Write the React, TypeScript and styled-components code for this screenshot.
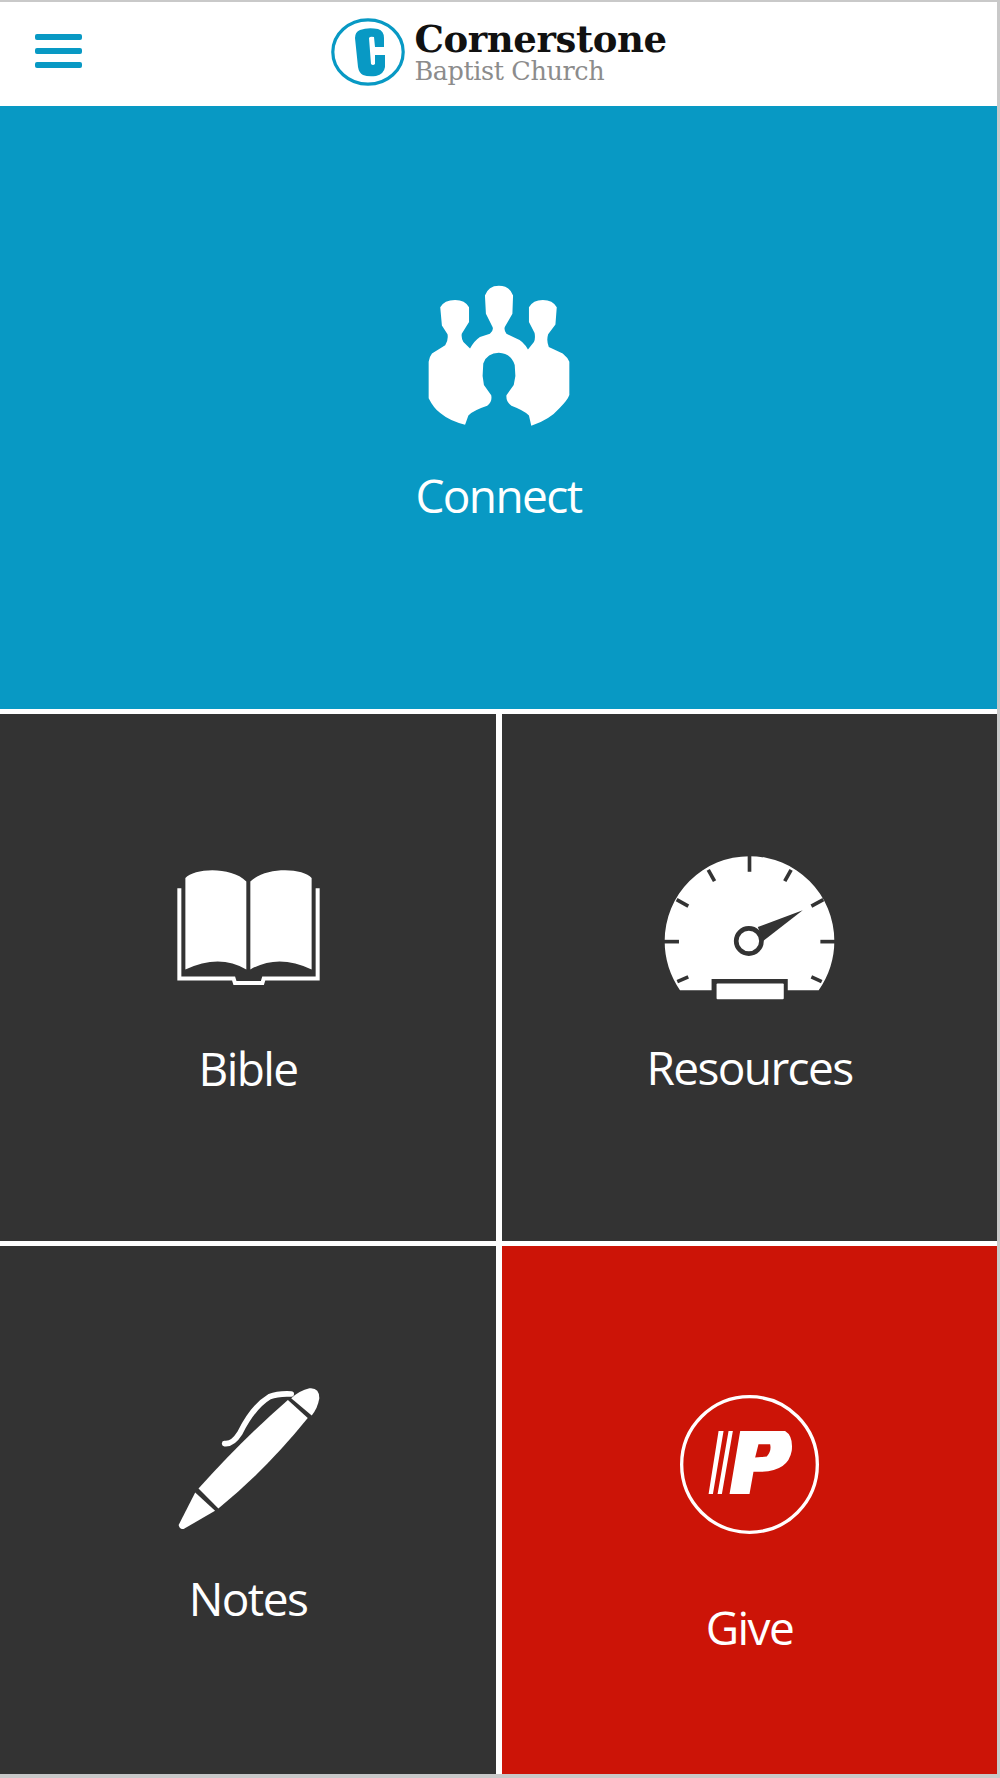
import React from 'react';
import styled, { createGlobalStyle } from 'styled-components';

const colors = {
  blue: '#0899c4',
  dark: '#333333',
  red: '#cc1407',
  frame: '#c9c9c9',
};

const GlobalStyle = createGlobalStyle`
  html, body {
    margin: 0;
    padding: 0;
    background: #fff;
  }
`;

const ConnectIcon = () => (
  <svg width="143" height="143" viewBox="80 40 432 432">
    <path
      fill="#fff"
      d="M195 465 L205 437 Q220 422 262 408 Q278 396 274 376 L252 345 L248 318 L250 280 Q262 248 297 248 Q335 250 345 285 L347 318 L342 345 L320 376 Q318 396 335 408 Q372 422 388 437 L395 468 Q450 450 480 415 Q505 390 510 375 L510 275 Q505 262 490 250 L448 230 Q440 212 446 192 L468 162 L472 110 Q460 88 430 88 Q400 88 388 110 L388 155 L405 188 Q408 205 403 215 L385 238 Q370 212 350 205 L320 190 Q312 180 315 170 L338 130 L340 75 Q330 45 297 45 Q265 45 255 75 L258 130 L278 170 Q282 180 270 190 L240 200 Q222 212 210 235 L190 215 Q183 205 185 190 L207 155 L207 110 Q195 88 165 88 Q132 88 120 110 L125 165 L142 192 Q145 210 135 225 L95 250 Q87 260 85 275 L85 385 Q100 415 120 430 Q150 455 195 465 Z"
    />
  </svg>
);

const BookIcon = () => (
  <svg width="144" height="118" viewBox="80 55 430 352">
    <g fill="#fff">
      <path d="M108 85 C135 55 245 50 290 95 L290 358 Q210 310 108 358 Z" />
      <path d="M302 95 C350 50 460 55 485 85 L485 358 Q385 310 302 358 Z" />
    </g>
    <path
      fill="none"
      stroke="#fff"
      strokeWidth="12"
      d="M90 115 L90 385 L252 385 L256 398 L338 398 L342 385 L503 385 L503 115"
    />
  </svg>
);

const GaugeIcon = () => (
  <svg width="171" height="146" viewBox="70 42 514 438">
    <path
      fill="#fff"
      d="M118 448 Q72 380 72 300 A255 255 0 0 1 582 300 Q582 380 535 448 L442 448 L442 414 L213 414 L213 448 Z"
    />
    <rect x="228" y="428" width="202" height="47" rx="3" fill="#fff" />
    <g stroke={colors.dark} strokeWidth="11">
      <path d="M327 44 V92" />
      <path d="M203 86 L222 120" />
      <path d="M108 176 L143 195" />
      <path d="M70 302 H115" />
      <path d="M110 422 L143 408" />
      <path d="M452 86 L433 120" />
      <path d="M549 176 L513 195" />
      <path d="M586 302 H540" />
      <path d="M544 422 L513 408" />
    </g>
    <path fill={colors.dark} d="M487 208 L352 258 L368 300 Z" />
    <circle cx="325" cy="300" r="38" fill="#fff" stroke={colors.dark} strokeWidth="14" />
  </svg>
);

const PenIcon = () => (
  <svg width="143" height="143" viewBox="80 48 432 432">
    <g fill="#fff">
      <path d="M145 358 Q275 212 415 90 L475 145 Q350 300 205 418 Z" />
      <path d="M135 370 L195 425 L100 480 Q88 482 85 468 Z" />
      <path d="M425 85 Q450 62 480 55 Q510 52 510 85 Q505 115 487 137 Z" />
    </g>
    <path
      fill="none"
      stroke="#fff"
      strokeWidth="17"
      strokeLinecap="round"
      d="M224 222 Q248 225 270 190 Q310 110 360 80 Q385 70 425 72"
    />
  </svg>
);

const PayIcon = () => (
  <svg width="139" height="139" viewBox="59 47 418 418">
    <circle cx="268" cy="256" r="204" fill="none" stroke="#fff" strokeWidth="10" />
    <path
      fill="#fff"
      fillRule="evenodd"
      d="M240 155 L375 155 Q400 170 395 215 Q385 275 305 278 L280 278 L268 345 L208 345 Z M295 195 L285 235 L320 232 Q335 215 330 195 Z"
    />
    <path fill="#fff" d="M175 155 L190 155 L158 345 L145 345 Z M205 155 L218 155 L185 345 L172 345 Z" />
  </svg>
);

const LogoMark = () => (
  <svg width="74" height="68" viewBox="0 0 74 68">
    <ellipse cx="37" cy="34" rx="35.2" ry="32.2" fill="#fff" stroke={colors.blue} strokeWidth="3.2" />
    <path
      fill={colors.blue}
      d="M29 12 Q37 9 47 11 Q53 13 53 20 L53 29 L44 29 L43 19 Q39 18 38 20 L40 46 Q42 48 44 46 L44 37 L54 37 L54 49 Q53 56 45 58 Q37 59 32 57 Q28 55 27 49 L24 20 Q24 14 29 12 Z"
    />
  </svg>
);

export default function App() {
  return (
    <>
      <GlobalStyle />
      <S.Frame>
        <S.Header>
          <S.Burger aria-label="Menu">
            <span />
            <span />
            <span />
          </S.Burger>
          <S.Logo>
            <LogoMark />
            <S.LogoText>
              <S.LogoName>Cornerstone</S.LogoName>
              <S.LogoSub>Baptist Church</S.LogoSub>
            </S.LogoText>
          </S.Logo>
        </S.Header>
        <S.Tiles>
          <S.Tile $color={colors.blue} $wide $top={178}>
            <ConnectIcon />
            <S.Label $gap={41}>Connect</S.Label>
          </S.Tile>
          <S.Tile $color={colors.dark} $top={154}>
            <BookIcon />
            <S.Label $gap={55}>Bible</S.Label>
          </S.Tile>
          <S.Tile $color={colors.dark} $top={141}>
            <GaugeIcon />
            <S.Label $gap={39}>Resources</S.Label>
          </S.Tile>
          <S.Tile $color={colors.dark} $top={140}>
            <PenIcon />
            <S.Label $gap={42}>Notes</S.Label>
          </S.Tile>
          <S.Tile $color={colors.red} $top={149}>
            <PayIcon />
            <S.Label $gap={66}>Give</S.Label>
          </S.Tile>
        </S.Tiles>
      </S.Frame>
    </>
  );
}

const S = {
  Frame: styled.div`
    box-sizing: border-box;
    width: 1000px;
    height: 1778px;
    display: flex;
    flex-direction: column;
    background: #fff;
    border-top: 2px solid ${colors.frame};
    border-right: 3px solid ${colors.frame};
    border-bottom: 4px solid ${colors.frame};
  `,
  Header: styled.header`
    height: 104px;
    flex: none;
    display: grid;
    grid-template-columns: 1fr auto 1fr;
    align-items: center;
  `,
  Burger: styled.button`
    width: 47px;
    height: 34px;
    margin: 0 0 6px 35px;
    padding: 0;
    border: 0;
    background: none;
    display: flex;
    flex-direction: column;
    justify-content: space-between;

    span {
      display: block;
      height: 6px;
      border-radius: 2px;
      background: ${colors.blue};
    }
  `,
  Logo: styled.div`
    display: flex;
    align-items: center;
    gap: 9px;
    margin: 0 0 4px 1px;
  `,
  LogoText: styled.div`
    display: flex;
    flex-direction: column;
  `,
  LogoName: styled.div`
    font-family: 'DejaVu Serif', serif;
    font-weight: 700;
    font-size: 37px;
    line-height: 38px;
    letter-spacing: -0.4px;
    color: #111;
  `,
  LogoSub: styled.div`
    font-family: 'DejaVu Serif', serif;
    font-size: 25.5px;
    line-height: 26px;
    letter-spacing: -0.4px;
    color: #8c8c8c;
  `,
  Tiles: styled.main`
    flex: 1;
    display: grid;
    grid-template-columns: 496px 495px;
    grid-template-rows: 603px 527px 528px;
    column-gap: 6px;
    row-gap: 5px;
  `,
  Tile: styled.a<{ $color: string; $wide?: boolean; $top: number }>`
    grid-column: ${(p) => (p.$wide ? '1 / -1' : 'auto')};
    background: ${(p) => p.$color};
    padding-top: ${(p) => p.$top}px;
    display: flex;
    flex-direction: column;
    align-items: center;
  `,
  Label: styled.div<{ $gap: number }>`
    margin-top: ${(p) => p.$gap}px;
    font-family: 'Open Sans', sans-serif;
    font-weight: 500;
    font-size: 46px;
    line-height: 54px;
    letter-spacing: -1.6px;
    color: #fff;
  `,
};
